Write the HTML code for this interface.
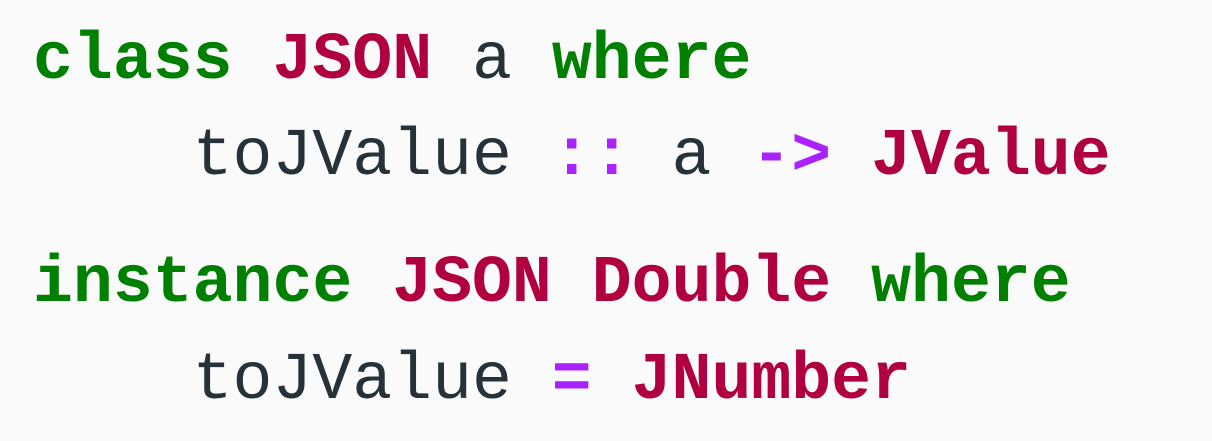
<!DOCTYPE html>
<html><head><meta charset="utf-8"><style>
html,body{margin:0;padding:0;background:#fafafa;width:1212px;height:441px;overflow:hidden}
.l{position:absolute;left:33px;font-family:"Liberation Mono",monospace;font-size:66.5px;line-height:97px;white-space:pre;color:#263238}
.k{color:#008000;font-weight:bold}
.t{color:#b00040;font-weight:bold}
.o{color:#aa22ff;font-weight:bold}
</style></head><body>
<div class="l" style="top:12px"><span class="k">class</span> <span class="t">JSON</span> a <span class="k">where</span></div>
<div class="l" style="top:108px">    toJValue <span class="o">::</span> a <span class="o">-&gt;</span> <span class="t">JValue</span></div>
<div class="l" style="top:235px"><span class="k">instance</span> <span class="t">JSON</span> <span class="t">Double</span> <span class="k">where</span></div>
<div class="l" style="top:332px">    toJValue <span class="o">=</span> <span class="t">JNumber</span></div>
</body></html>
